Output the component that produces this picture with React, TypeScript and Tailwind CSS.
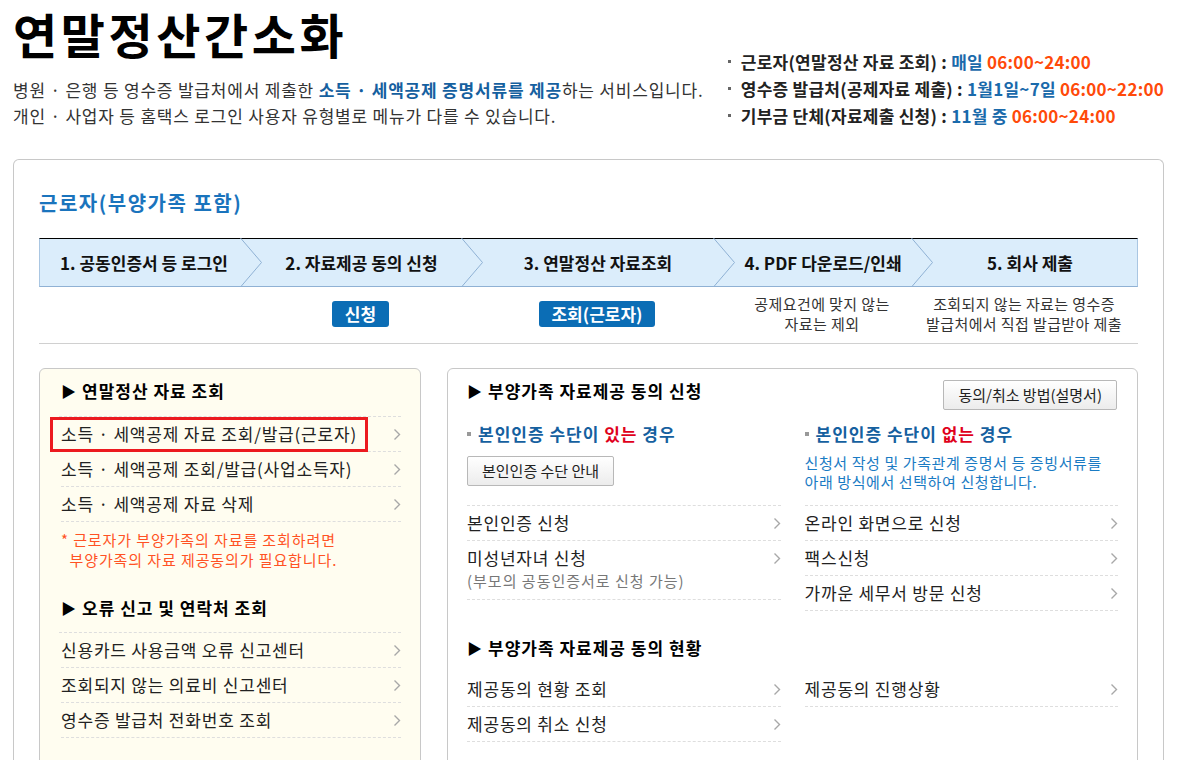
import React, { FC } from "react";

const Chevron: FC = () => (
  <svg width="8" height="13" viewBox="0 0 8 13" className="shrink-0">
    <polyline points="1.5,1.5 6.5,6.5 1.5,11.5" fill="none" stroke="#a8a8a8" strokeWidth="1.4" />
  </svg>
);

const StepArrow: FC = () => (
  <svg
    width="22"
    height="49"
    viewBox="0 0 22 49"
    className="absolute -right-[22px] -top-[1px] z-10"
  >
    <polyline points="0.5,0 21.5,24.5 0.5,49" fill="none" stroke="#8fb1d4" strokeWidth="1" />
  </svg>
);

const Tri: FC = () => <span className="mr-[6px] text-[15px] tracking-normal">▶</span>;

const Row: FC<{ text: string; sub?: string; boxed?: boolean }> = ({ text, sub, boxed }) => (
  <div
    className={
      sub
        ? "flex items-start justify-between border-b border-dashed border-[#dedede] pt-[4px] pb-[8px]"
        : "flex h-[35px] items-center justify-between border-b border-dashed border-[#dedede]"
    }
  >
    <div className="flex flex-col">
      {boxed ? (
        <span className="-ml-[11px] flex h-[35px] items-center border-[3px] border-[#ec1a1f] px-[8px] text-[17px] tracking-[0.8px] text-[#222]">
          {text}
        </span>
      ) : (
        <span className="text-[17px] leading-[26px] tracking-[0.8px] text-[#222]">{text}</span>
      )}
      {sub && <span className="text-[15px] leading-[20px] tracking-[1px] text-[#777]">{sub}</span>}
    </div>
    <div className={sub ? "pt-[7px]" : ""}>
      <Chevron />
    </div>
  </div>
);

const GrayButton: FC<{ text: string }> = ({ text }) => (
  <button className="h-[30px] rounded-[2px] border border-[#b8b8b8] bg-gradient-to-b from-white to-[#ececec] px-[14px] text-[15px] text-[#222]">
    {text}
  </button>
);

const SubHead: FC<{ word: string }> = ({ word }) => (
  <div className="flex items-center text-[17px] font-bold leading-[24px] tracking-[1px] text-[#15609f]">
    <span className="mr-[7px] inline-block h-[4px] w-[4px] bg-[#999]" />
    본인인증 수단이&nbsp;<span className="text-[#e0001b]">{word}</span>&nbsp;경우
  </div>
);

const PanelHead: FC<{ text: string }> = ({ text }) => (
  <div className="flex items-center text-[17px] font-bold leading-[24px] tracking-[1px] text-black">
    <Tri />
    {text}
  </div>
);

const steps = [
  { label: "1. 공동인증서 등 로그인", cls: "w-[200px] pl-[8px]" },
  { label: "2. 자료제공 동의 신청", cls: "w-[221px] pl-[22px]" },
  { label: "3. 연말정산 자료조회", cls: "w-[252px] pl-[22px]" },
  { label: "4. PDF 다운로드/인쇄", cls: "w-[198px] pl-[22px]" },
  { label: "5. 회사 제출", cls: "flex-1 pl-[12px]" },
];

export default function App() {
  return (
    <div className="min-h-screen bg-white font-['Noto_Sans_CJK_KR','Noto_Sans',sans-serif] text-[#222]">
      {/* top header */}
      <div className="flex justify-between px-[13px]">
        <div>
          <h1 className="text-[48px] font-bold leading-[66px] tracking-[3.6px] text-black">연말정산간소화</h1>
          <div className="mt-[11px] text-[17px] leading-[26px] tracking-[0.8px] text-[#333]">
            <p>
              병원 · 은행 등 영수증 발급처에서 제출한{" "}
              <span className="font-bold text-[#15609f]">소득 · 세액공제 증명서류를 제공</span>하는 서비스입니다.
            </p>
            <p>개인 · 사업자 등 홈택스 로그인 사용자 유형별로 메뉴가 다를 수 있습니다.</p>
          </div>
        </div>
        <div className="pt-[48px] text-[17px] font-bold leading-[27px] tracking-[0.25px]">
          <div className="flex items-center">
            <span className="mr-[10px] inline-block h-[3px] w-[3px] bg-[#666]" />
            근로자(연말정산 자료 조회) :&nbsp;<span className="text-[#1a6aab]">매일</span>&nbsp;
            <span className="text-[#ff4a0a]">06:00~24:00</span>
          </div>
          <div className="flex items-center">
            <span className="mr-[10px] inline-block h-[3px] w-[3px] bg-[#666]" />
            영수증 발급처(공제자료 제출) :&nbsp;<span className="text-[#1a6aab]">1월1일~7일</span>&nbsp;
            <span className="text-[#ff4a0a]">06:00~22:00</span>
          </div>
          <div className="flex items-center">
            <span className="mr-[10px] inline-block h-[3px] w-[3px] bg-[#666]" />
            기부금 단체(자료제출 신청) :&nbsp;<span className="text-[#1a6aab]">11월 중</span>&nbsp;
            <span className="text-[#ff4a0a]">06:00~24:00</span>
          </div>
        </div>
      </div>

      {/* main card */}
      <div className="mx-[13px] mt-[30px] rounded-t-[6px] border border-b-0 border-[#c8c8c8] px-[25px] pt-[29px] pb-[40px]">
        <h2 className="text-[20px] font-semibold leading-[28px] tracking-[1.5px] text-[#1a74bd]">근로자(부양가족 포함)</h2>

        {/* steps */}
        <div className="mt-[21px] flex h-[49px] border-t border-b border-l border-r border-t-black border-b-[#8fb1d4] border-l-[#a9c6e2] border-r-[#a9c6e2] bg-[#dbedfb]">
          {steps.map((s, i) => (
            <div key={i} className={`relative flex items-center justify-center ${s.cls}`}>
              <span className="text-[17px] font-bold text-[#111]">{s.label}</span>
              {i < steps.length - 1 && <StepArrow />}
            </div>
          ))}
        </div>

        <div className="mt-[14px] flex h-[42px]">
          <div className="w-[200px]" />
          <div className="flex w-[221px] justify-center pl-[22px]">
            <span className="flex h-[26px] items-center rounded-[3px] bg-[#0b6db5] px-[13px] text-[17px] font-bold text-white">
              신청
            </span>
          </div>
          <div className="flex w-[252px] justify-center pl-[22px]">
            <span className="flex h-[26px] items-center rounded-[3px] bg-[#0b6db5] px-[12px] text-[17px] font-bold text-white">
              조회(근로자)
            </span>
          </div>
          <div className="w-[198px] -mt-[7px] pl-[22px] text-center text-[15px] leading-[20px] tracking-[0.4px] text-[#333]">
            공제요건에 맞지 않는
            <br />
            자료는 제외
          </div>
          <div className="flex-1 -mt-[7px] text-center text-[15px] leading-[20px] tracking-[0.4px] text-[#333]">
            조회되지 않는 자료는 영수증
            <br />
            발급처에서 직접 발급받아 제출
          </div>
        </div>

        <div className="border-t border-[#d0d0d0]" />

        {/* panels */}
        <div className="mt-[24px] flex gap-[26px]">
          {/* left panel */}
          <div className="w-[382px] rounded-[6px] border border-[#c8c8c8] bg-[#fffdf0] px-[19px] pt-[10px] pb-[40px]">
            <div className="pl-[2px]">
              <PanelHead text="연말정산 자료 조회" />
            </div>
            <div className="mt-[13px] border-t border-dashed border-[#dedede] pl-[2px]">
              <Row text="소득 · 세액공제 자료 조회/발급(근로자)" boxed />
              <Row text="소득 · 세액공제 조회/발급(사업소득자)" />
              <Row text="소득 · 세액공제 자료 삭제" />
            </div>
            <p className="mt-[8px] pl-[2px] text-[15px] leading-[20px] tracking-[0.9px] text-[#ff5224]">
              * 근로자가 부양가족의 자료를 조회하려면
              <br />
              &nbsp;&nbsp;부양가족의 자료 제공동의가 필요합니다.
            </p>
            <div className="mt-[26px] pl-[2px]">
              <PanelHead text="오류 신고 및 연락처 조회" />
            </div>
            <div className="mt-[12px] border-t border-dashed border-[#dedede] pl-[2px]">
              <Row text="신용카드 사용금액 오류 신고센터" />
              <Row text="조회되지 않는 의료비 신고센터" />
              <Row text="영수증 발급처 전화번호 조회" />
            </div>
          </div>

          {/* right panel */}
          <div className="flex-1 rounded-[6px] border border-[#c8c8c8] bg-white px-[19px] pt-[10px] pb-[40px]">
            <div className="flex items-start justify-between">
              <PanelHead text="부양가족 자료제공 동의 신청" />
              <div className="mt-[1px] mr-[1px]">
                <GrayButton text="동의/취소 방법(설명서)" />
              </div>
            </div>

            <div className="mt-[12px] grid grid-cols-2 gap-x-[24px]">
              <div>
                <SubHead word="있는" />
                <div className="h-[59px] pt-[10px]">
                  <GrayButton text="본인인증 수단 안내" />
                </div>
                <div className="border-t border-dashed border-[#dedede]">
                  <Row text="본인인증 신청" />
                  <Row text="미성년자녀 신청" sub="(부모의 공동인증서로 신청 가능)" />
                </div>
              </div>
              <div>
                <SubHead word="없는" />
                <div className="h-[59px] pt-[7px] text-[15px] leading-[19px] tracking-[0.6px] text-[#1a7bc4]">
                  <p>신청서 작성 및 가족관계 증명서 등 증빙서류를</p>
                  <p>아래 방식에서 선택하여 신청합니다.</p>
                </div>
                <div className="border-t border-dashed border-[#dedede]">
                  <Row text="온라인 화면으로 신청" />
                  <Row text="팩스신청" />
                  <Row text="가까운 세무서 방문 신청" />
                </div>
              </div>
            </div>

            <div className="mt-[25px]">
              <PanelHead text="부양가족 자료제공 동의 현황" />
            </div>
            <div className="mt-[12px] grid grid-cols-2 gap-x-[24px]">
              <div>
                <Row text="제공동의 현황 조회" />
                <Row text="제공동의 취소 신청" />
              </div>
              <div>
                <Row text="제공동의 진행상황" />
              </div>
            </div>
          </div>
        </div>
      </div>
    </div>
  );
}
